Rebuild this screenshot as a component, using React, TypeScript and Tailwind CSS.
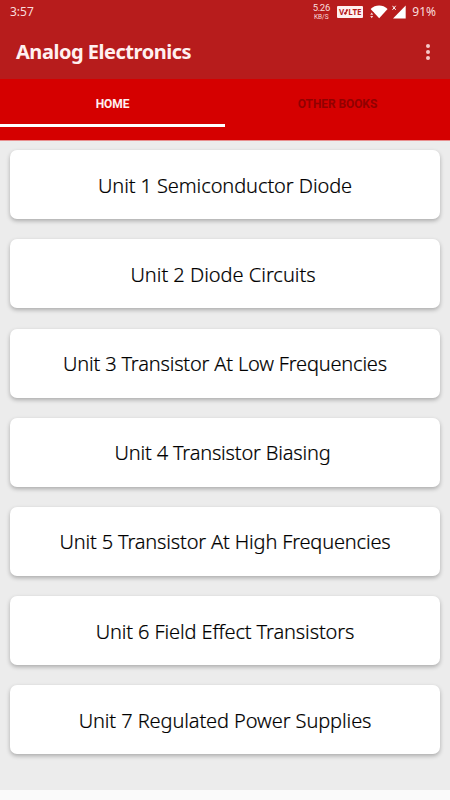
const units = [
  { title: 'Unit 1 Semiconductor Diode', tracking: 'tracking-[-0.08px]' },
  { title: 'Unit 2 Diode Circuits', tracking: 'tracking-[-0.01px] pr-1' },
  { title: 'Unit 3 Transistor At Low Frequencies', tracking: 'tracking-[-0.18px]' },
  { title: 'Unit 4 Transistor Biasing', tracking: 'tracking-[-0.18px] pr-[5px]' },
  { title: 'Unit 5 Transistor At High Frequencies', tracking: 'tracking-[-0.16px]' },
  { title: 'Unit 6 Field Effect Transistors', tracking: 'tracking-[-0.12px]' },
  { title: 'Unit 7 Regulated Power Supplies', tracking: 'tracking-[-0.09px]' },
];

function StatusBar() {
  return (
    <div className="flex h-6 items-center justify-between pl-[10px] pr-[14px] text-[#f8dcdc]">
      <span className="text-[12px] leading-none">3:57</span>
      <div className="flex h-6 items-center">
        <div className="mr-[7px] flex w-[18px] flex-col items-center font-['Roboto',sans-serif]">
          <span className="text-[9.5px] leading-[9px] tracking-[-0.3px]">5.26</span>
          <span className="pt-px text-[6.5px] leading-[8px]">KB/S</span>
        </div>
        <div className="mr-[7px] flex h-[12px] w-[26px] items-center justify-center rounded-[1px] bg-[#fff0f0] text-[8px] font-bold leading-none text-[#b71c1c]">
          <span>V</span>
          <svg width="4" height="8" viewBox="0 0 4 8" fill="currentColor">
            <circle cx="1.3" cy="5.3" r="1.2" />
            <circle cx="2.7" cy="2.6" r="1" />
            <path d="M2.7 1 4 1.4 1.5 6.8.6 6Z" />
          </svg>
          <span>LTE</span>
        </div>
        <svg className="mr-[4px]" width="18" height="14" viewBox="0 0 18 14" fill="white">
          <path d="M.6 3.9C5.5-.7 12.7-.7 17.6 3.9L9.2 13.3Z" />
          <path d="M0 7h3.4v7H0z" fill="#b71c1c" />
          <path d="m1.7 7.6 1.5 2.2H.2ZM1.7 13.2l1.5-2.2H.2Z" fillOpacity=".8" />
        </svg>
        <svg className="mr-[6px]" width="14" height="14" viewBox="0 0 14 14" fill="white">
          <path d="M13.7.5v13H1Z" />
          <path d="m.5.8 3.2 4M3.7.8l-3.2 4" stroke="white" strokeWidth="1" />
        </svg>
        <span className="text-[12px] leading-none">91%</span>
      </div>
    </div>
  );
}

export default function App() {
  return (
    <div className="flex h-[800px] w-[450px] flex-col overflow-hidden bg-[#fafafa] font-['Noto_Sans',sans-serif]">
      <header className="h-[79px] shrink-0 bg-[#b71c1c]">
        <StatusBar />
        <div className="flex h-[55px] items-center justify-between pl-[16px] pr-[20px]">
          <h1 className="pt-px text-[20px] font-bold leading-none tracking-[-0.47px] text-[#fff0f0]">Analog Electronics</h1>
          <svg width="4" height="18" viewBox="0 0 4 18" fill="#f6c9c9">
            <circle cx="2" cy="3" r="2" />
            <circle cx="2" cy="9" r="2" />
            <circle cx="2" cy="15" r="2" />
          </svg>
        </div>
      </header>
      <nav className="grid h-[62px] shrink-0 grid-cols-2 border-b border-[#e88f8f] bg-[#d50000] font-['Roboto',sans-serif] text-[12px] font-bold tracking-[-0.1px]">
        <button className="flex h-[48px] items-center justify-center border-b-[3px] border-white pt-[4px] text-[#fff0f0]">HOME</button>
        <button className="flex h-[48px] items-center justify-center border-b-[3px] border-transparent pt-[4px] text-[#910000]">OTHER BOOKS</button>
      </nav>
      <main className="flex h-[649px] shrink-0 flex-col gap-[20.17px] bg-[#ececec] px-[10px] pt-[9.3px]">
        {units.map((unit) => (
          <button
            key={unit.title}
            className="flex h-[69px] shrink-0 items-center justify-center rounded-[7px] bg-white pt-[2px] text-[20px] font-light leading-none text-black shadow-[0_2px_4px_rgba(0,0,0,0.28)] [-webkit-text-stroke:0.2px_black]"
          >
            <span className={`whitespace-nowrap ${unit.tracking}`}>{unit.title}</span>
          </button>
        ))}
      </main>
    </div>
  );
}
